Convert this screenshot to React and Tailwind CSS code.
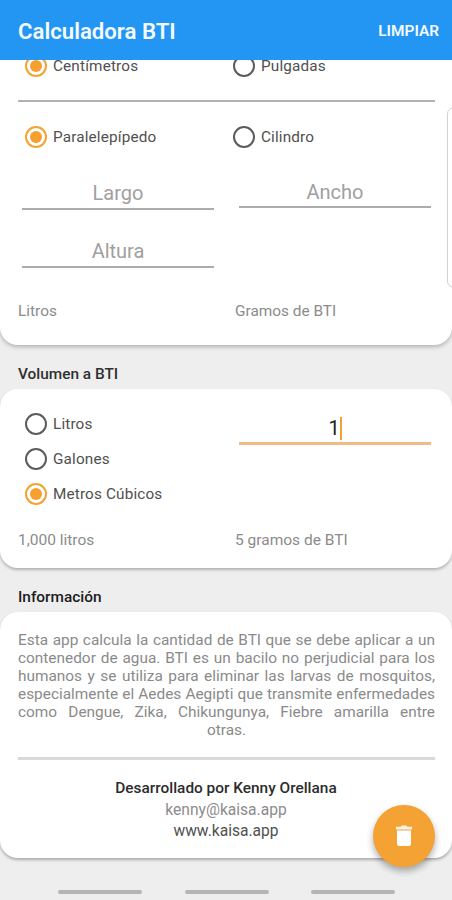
function Radio({ label, checked, spacing = 'tracking-[0.01em]' }) {
  return (
    <div className="flex h-[22px] items-center gap-1.5">
      <span
        className={
          checked
            ? 'flex size-[22px] items-center justify-center rounded-full border-2 border-[#f5a133]'
            : 'size-[22px] rounded-full border-2 border-[#5c5c5c]'
        }
      >
        {checked && <span className="size-3 rounded-full bg-[#f5a02f]" />}
      </span>
      <span className={`text-[15.3px] leading-[22px] whitespace-nowrap text-[#505050] ${spacing}`}>{label}</span>
    </div>
  );
}

function Field({ label, className }) {
  return (
    <div className={`flex h-8 items-start justify-center border-b-2 border-[#acacac] text-xl leading-[30px] text-[#a0a0a0] ${className}`}>
      {label}
    </div>
  );
}

const infoLines = [
  'Esta app calcula la cantidad de BTI que se debe aplicar a un',
  'contenedor de agua. BTI es un bacilo no perjudicial para los',
  'humanos y se utiliza para eliminar las larvas de mosquitos,',
  'especialmente el Aedes Aegipti que transmite enfermedades',
  'como Dengue, Zika, Chikungunya, Fiebre amarilla entre',
];

export default function App() {
  return (
    <div className="relative flex h-[900px] w-[452px] flex-col overflow-hidden bg-[#eeeeee] font-['Roboto','Noto_Sans',sans-serif]">
      <header className="z-10 flex h-[60px] shrink-0 items-center justify-between bg-[#2396f3] pt-0.5 pr-[13px] pl-[18px] text-[#f4faff]">
        <h1 className="text-[22.2px] leading-[30px] font-semibold">Calculadora BTI</h1>
        <button className="text-[15.4px] leading-5 font-semibold">LIMPIAR</button>
      </header>

      <main className="flex flex-1 flex-col">
        <section className="h-[285px] rounded-b-[18px] bg-white px-[18px] shadow-[0_2px_4px_rgba(0,0,0,0.25)]">
          <div className="-mt-[5px] grid grid-cols-[208px_1fr] pl-[7px]">
            <Radio label="Centímetros" checked />
            <Radio label="Pulgadas" />
          </div>
          <div className="mt-[23px] h-[2px] w-[417px] bg-[#b2b2b2]" />
          <div className="mt-6 grid grid-cols-[208px_1fr] pl-[7px]">
            <Radio label="Paralelepípedo" checked />
            <Radio label="Cilindro" />
          </div>
          <div className="mt-7 grid grid-cols-[217px_1fr] pl-1">
            <div>
              <Field label="Largo" className="mt-[2px] w-[192px]" />
              <Field label="Altura" className="mt-[26px] w-[192px]" />
            </div>
            <Field label="Ancho" className="mt-px h-[31px] w-[192px]" />
          </div>
          <div className="mt-8 grid grid-cols-[217px_1fr] text-[15.4px] leading-[22px] text-[#8b8b8b]">
            <span>Litros</span>
            <span>Gramos de BTI</span>
          </div>
        </section>

        <h2 className="mt-[18px] h-[26px] pl-[18px] text-[15.4px] leading-[22px] font-medium text-[#303030]">Volumen a BTI</h2>
        <section className="h-[179px] rounded-[18px] bg-white px-[18px] pt-6 shadow-[0_2px_3px_rgba(0,0,0,0.25)]">
          <div className="grid grid-cols-[221px_1fr]">
            <div className="flex flex-col gap-[13px] pl-[7px]">
              <Radio label="Litros" />
              <Radio label="Galones" />
              <Radio label="Metros Cúbicos" checked />
            </div>
            <div className="flex h-8 w-[192px] items-start justify-center border-b-[3px] border-[#f2bb86] text-xl leading-[30px] text-[#222222]">
              <span>1</span>
              <span className="mt-1 h-[23px] w-[2px] bg-[#f5a02f]" />
            </div>
          </div>
          <div className="mt-[24px] grid grid-cols-[217px_1fr] text-[15.5px] leading-[22px] text-[#8b8b8b]">
            <span>1,000 litros</span>
            <span>5 gramos de BTI</span>
          </div>
        </section>

        <h2 className="mt-[18px] h-[26px] pl-[18px] text-[15.4px] leading-[22px] font-medium text-[#202020]">Información</h2>
        <section className="h-[246px] rounded-[18px] bg-white px-[18px] pt-[19px] shadow-[0_2px_3px_rgba(0,0,0,0.28)]">
          <p className="w-[417px] text-[15.4px] leading-[18px] text-[#8a8a8a]">
            {infoLines.map((line) => (
              <span key={line} className="block text-justify whitespace-normal [text-align-last:justify]">{line}</span>
            ))}
            <span className="block text-center">otras.</span>
          </p>
          <div className="mt-[18px] h-[3px] w-[417px] bg-[#d9d9d9]" />
          <div className="mt-[18px] flex flex-col items-center text-[15.4px] leading-[21.5px] text-[#505050]">
            <span className="font-medium text-[#2c2c2c]">Desarrollado por Kenny Orellana</span>
            <span className="text-[15.6px] text-[#8c8c8c]">kenny@kaisa.app</span>
            <span className="text-[15.6px]">www.kaisa.app</span>
          </div>
        </section>
      </main>

      <footer className="flex h-[10px] shrink-0 gap-[42.5px] pl-[58px]">
        <span className="h-[4px] w-[84px] rounded-full bg-[#b5b5b5]" />
        <span className="h-[4px] w-[84px] rounded-full bg-[#b5b5b5]" />
        <span className="h-[4px] w-[84px] rounded-full bg-[#b5b5b5]" />
      </footer>

      <div className="absolute top-[107px] -right-[20px] h-[181px] w-[25px] rounded-[7px] border border-[#d2d2d2] bg-white" />

      <button className="absolute top-[805px] left-[373px] flex size-[62px] items-center justify-center rounded-full bg-[#f5a235] shadow-[0_4px_7px_rgba(0,0,0,0.32)]">
        <svg viewBox="0 0 18 22" className="h-[22px] w-[18px]">
          <path d="M1 1.8h4.8L6.8.5h4.4l1 1.3H17v2.7H1z" fill="#fff4e2" />
          <path d="M2 5.5h14V19a2 2 0 0 1-2 2H4a2 2 0 0 1-2-2z" fill="#fff" />
        </svg>
      </button>
    </div>
  );
}
